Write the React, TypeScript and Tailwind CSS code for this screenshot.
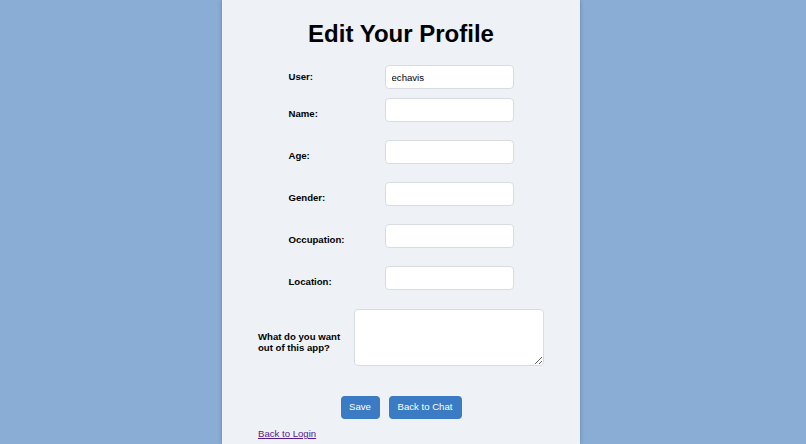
const fields = ['Name:', 'Age:', 'Gender:', 'Occupation:', 'Location:']

function Field({ label, value }: { label: string; value?: string }) {
  return (
    <div className="flex h-[42px] items-start">
      <label className="mt-[10px] w-[96px] text-[9.6px] font-bold leading-[12px] text-black">
        {label}
      </label>
      <input
        type="text"
        defaultValue={value}
        className="h-[24px] w-[129px] rounded-[4px] border border-[#d8dce2] bg-white px-[6px] text-[9.6px] text-black outline-none"
      />
    </div>
  )
}

export default function App() {
  return (
    <div
      className="min-h-[444px] w-full bg-[#8aadd5]"
      style={{ fontFamily: '"Liberation Sans", Arial, sans-serif' }}
    >
      <div className="ml-[222px] flex min-h-[444px] w-[358px] flex-col items-center bg-[#eef1f6] shadow-[0_0_4px_rgba(0,0,0,0.25)]">
        <h1 className="pt-[20px] text-[24px] font-bold leading-[28px] text-black">
          Edit Your Profile
        </h1>

        {/* basic fields */}
        <div className="mt-[17px] flex w-[225px] flex-col">
          <div className="flex h-[33px] items-start">
            <label className="mt-[6px] w-[96px] text-[9.6px] font-bold leading-[12px] text-black">
              User:
            </label>
            <input
              type="text"
              defaultValue="echavis"
              className="h-[24px] w-[129px] rounded-[4px] border border-[#d8dce2] bg-white px-[6px] text-[9.6px] text-black outline-none"
            />
          </div>
          {fields.map((f) => (
            <Field key={f} label={f} />
          ))}
        </div>

        <div className="mt-[1px] flex w-[286px] flex-col">
          <div className="flex items-center">
            <label className="mt-[8px] w-[96px] text-[9.6px] font-bold leading-[11px] text-black">
              What do you want out of this app?
            </label>
            <textarea className="h-[57px] w-[190px] rounded-[4px] border border-[#d8dce2] bg-white px-[6px] text-[9.6px] outline-none" />
          </div>

          <div className="mt-[30px] flex justify-center gap-[9px]">
            <button className="h-[23px] w-[39px] rounded-[4px] bg-[#3a7bc3] text-[9.6px] text-white">
              Save
            </button>
            <button className="h-[23px] w-[73px] rounded-[4px] bg-[#3a7bc3] text-[9.6px] text-white">
              Back to Chat
            </button>
          </div>

          <a href="#" className="mt-[8px] text-[9.6px] leading-[13px] text-[#551a8b] underline">
            Back to Login
          </a>
        </div>
      </div>
    </div>
  )
}
